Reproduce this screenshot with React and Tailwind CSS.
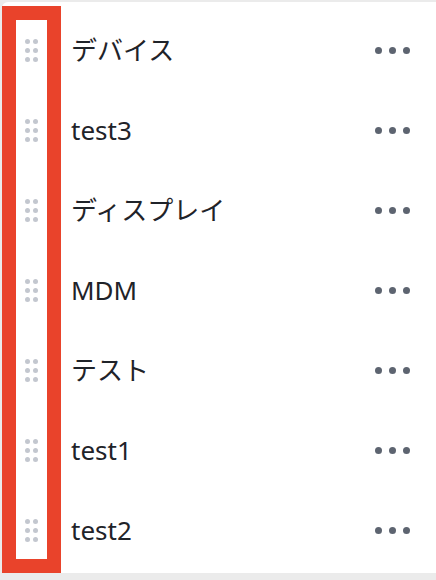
import { useState } from "react";

const items = ["デバイス", "test3", "ディスプレイ", "MDM", "テスト", "test1", "test2"];

function Grip() {
  return (
    <div className="grid grid-cols-2 gap-x-[3px] gap-y-[4px]">
      {Array.from({ length: 6 }).map((_, i) => (
        <span key={i} className="block w-[5px] h-[5px] rounded-full bg-[#c3c7cf]" />
      ))}
    </div>
  );
}

function MoreButton() {
  return (
    <button className="flex items-center gap-[7px] px-1 py-2">
      <span className="block w-[7px] h-[7px] rounded-full bg-[#5d6470]" />
      <span className="block w-[7px] h-[7px] rounded-full bg-[#5d6470]" />
      <span className="block w-[7px] h-[7px] rounded-full bg-[#5d6470]" />
    </button>
  );
}

export default function App() {
  const [list] = useState(items);

  return (
    <div
      className="relative h-[580px] w-[436px] overflow-hidden bg-[#ebebeb] pt-[2px] pl-[2px]"
      style={{ fontFamily: '"Noto Sans", "Noto Sans CJK JP", sans-serif' }}
    >
      <ul className="h-[571px] bg-white rounded-tl-[6px] pt-[8px]">
        {list.map((name) => (
          <li key={name} className="flex items-center h-[80px]">
            <div className="w-[59px] flex justify-center">
              <Grip />
            </div>
            <span className="ml-[10px] text-[26px] leading-none text-[#1f2329]">{name}</span>
            <div className="ml-auto mr-[22px]">
              <MoreButton />
            </div>
          </li>
        ))}
      </ul>

      {/* highlight frame around the drag handles */}
      <div className="absolute left-[2px] top-[6px] w-[59px] h-[567px] border-[14px] border-[#e9432b]" />
    </div>
  );
}
